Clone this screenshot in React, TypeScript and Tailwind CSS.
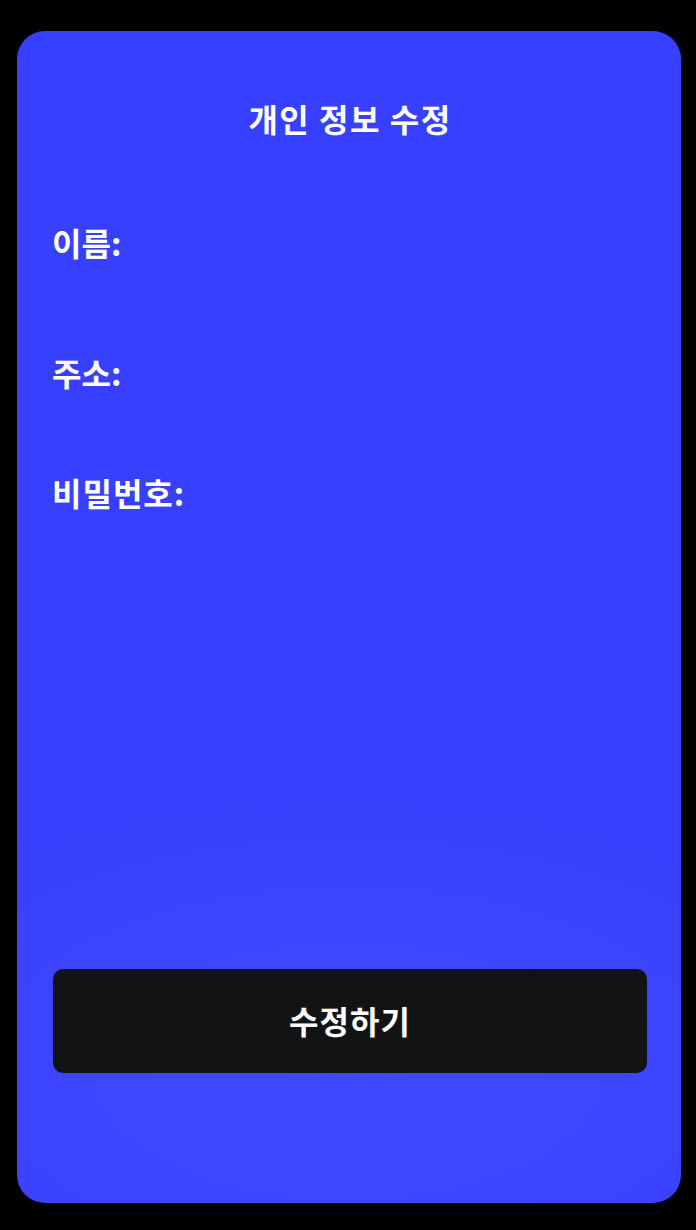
export default function App() {
  const font = { fontFamily: '"Noto Sans CJK KR", "Noto Sans", sans-serif' };

  return (
    <div className="min-h-[1230px] w-full bg-black pt-[31px] pb-[27px] pl-[17px]" style={font}>
      <div className="flex h-[1172px] w-[664px] flex-col rounded-[28px] bg-[#3840ff] bg-[radial-gradient(ellipse_560px_280px_at_50%_1040px,#4149ff_0%,#3c44ff_60%,#3840ff_100%)] pl-[36px] pr-[34px] pt-[67px] pb-[130px] text-white">
        {/* 제목 */}
        <h1 className="text-center text-[32px] font-bold leading-[40px] tracking-[1.5px]">개인 정보 수정</h1>

        {/* 항목들 */}
        <div className="mt-[84px] -ml-[1px] text-[32px] font-bold leading-[40px]">이름:</div>
        <div className="mt-[90px] -ml-[1px] text-[32px] font-bold leading-[40px]">주소:</div>
        <div className="mt-[80px] -ml-[1px] text-[32px] font-bold leading-[40px] tracking-[1px]">비밀번호:</div>

        {/* 버튼 */}
        <button className="mt-auto flex h-[104px] items-center justify-center rounded-[10px] bg-[#121315] pb-[3px] text-[32px] font-bold tracking-[1px] text-white">
          수정하기
        </button>
      </div>
    </div>
  );
}
